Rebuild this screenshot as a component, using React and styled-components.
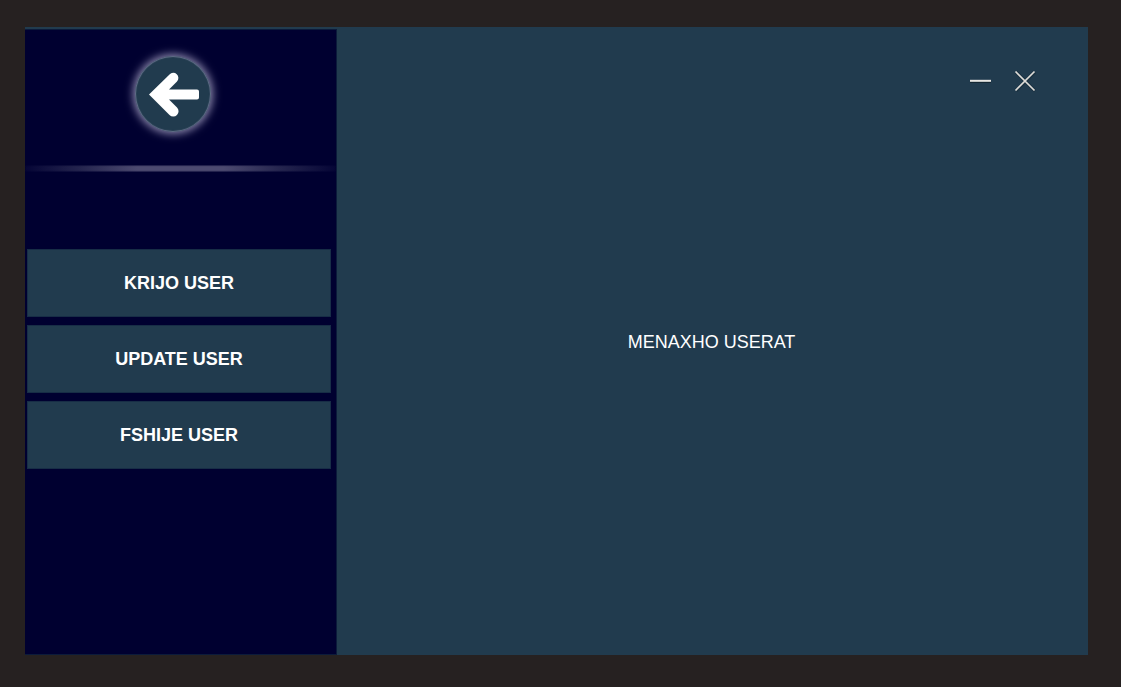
import React from "react";
import styled, { createGlobalStyle } from "styled-components";

const GlobalStyle = createGlobalStyle`
  *, *::before, *::after { box-sizing: border-box; }
  body {
    margin: 0;
    background: #262121;
    font-family: "Liberation Sans", Arial, sans-serif;
  }
`;

const Desktop = styled.div`
  display: flex;
  min-height: 100vh;
  padding: 27px 33px 32px 25px;
`;

const Window = styled.div`
  display: flex;
  flex: 1;
  padding-top: 2px;
  background: #213b4e;
`;

const Sidebar = styled.aside`
  display: flex;
  flex-direction: column;
  flex: 0 0 312px;
  padding-top: 26px;
  background: #000030;
  border: solid #0c1b3b;
  border-width: 1px 1px 1px 0;
`;

const BackButton = styled.button`
  width: 76px;
  height: 76px;
  margin-left: 110px;
  padding: 0;
  border: 0;
  border-radius: 50%;
  background: #213b4e;
  box-shadow: inset 0 0 1px 1px #66718c, 0 0 8px 2px #8c88ac;
  cursor: pointer;

  svg { display: block; }
`;

const Divider = styled.hr`
  width: 100%;
  height: 7px;
  margin: 33px 0 0;
  border: 0;
  background: linear-gradient(90deg, #050536, #25254f 18%, #4c4a70 36%, #4c4a70 64%, #25254f 82%, #050536);
  box-shadow: inset 0 1px 1px #00003099, inset 0 -1px 1px #00003099;
`;

const Menu = styled.nav`
  display: flex;
  flex-direction: column;
  gap: 8px;
  padding: 77px 5px 0 2px;
`;

const MenuButton = styled.button`
  height: 68px;
  border: 1px solid #172d46;
  background: #213b4e;
  color: #fff;
  font: bold 18px/20px "Liberation Sans", Arial, sans-serif;
  cursor: pointer;
`;

const Content = styled.div`
  display: flex;
  flex: 1;
  flex-direction: column;
`;

const WindowControls = styled.div`
  display: flex;
  justify-content: flex-end;
  gap: 23px;
  padding: 41px 52px 0 0;
`;

const ControlButton = styled.button`
  width: 22px;
  height: 22px;
  padding: 0;
  border: 0;
  background: none;
  cursor: pointer;

  svg { display: block; }
`;

const Main = styled.main`
  display: flex;
  flex: 1;
  align-items: center;
  justify-content: center;
  padding: 0 2px 64px 0;
`;

const Title = styled.h1`
  margin: 0;
  color: #fff;
  font-size: 18px;
  font-weight: normal;
  line-height: 20px;
`;

const actions = ["KRIJO USER", "UPDATE USER", "FSHIJE USER"];

export default function App() {
  return (
    <>
      <GlobalStyle />
      <Desktop>
        <Window>
          <Sidebar>
            <BackButton type="button" aria-label="Back">
              <svg width="76" height="76" viewBox="0 0 76 76">
                <path
                  d="M14 38.5 L34.5 18.5 A5 5 0 0 1 42 25.5 L34 33.5 H62 Q64 33.5 64 35.5 V41.5 Q64 43.5 62 43.5 H34 L42 51.5 A5 5 0 0 1 34.5 59 Z"
                  fill="#fff"
                />
              </svg>
            </BackButton>
            <Divider />
            <Menu>
              {actions.map((label) => (
                <MenuButton key={label} type="button">{label}</MenuButton>
              ))}
            </Menu>
          </Sidebar>
          <Content>
            <WindowControls>
              <ControlButton type="button" aria-label="Minimize">
                <svg width="22" height="22" viewBox="0 0 22 22">
                  <path d="M1 12.5H22" stroke="#142733" strokeWidth="1" />
                  <path d="M1 10.8H22" stroke="#e8e6e2" strokeWidth="2" />
                </svg>
              </ControlButton>
              <ControlButton type="button" aria-label="Close">
                <svg width="22" height="22" viewBox="0 0 22 22">
                  <path d="M2 2L21 21M21 2L2 21" stroke="#1a2f3d" strokeWidth="3.4" opacity="0.6" />
                  <path d="M1.5 1.5L20.5 20.5M20.5 1.5L1.5 20.5" stroke="#dedcd8" strokeWidth="1.7" />
                </svg>
              </ControlButton>
            </WindowControls>
            <Main>
              <Title>MENAXHO USERAT</Title>
            </Main>
          </Content>
        </Window>
      </Desktop>
    </>
  );
}
